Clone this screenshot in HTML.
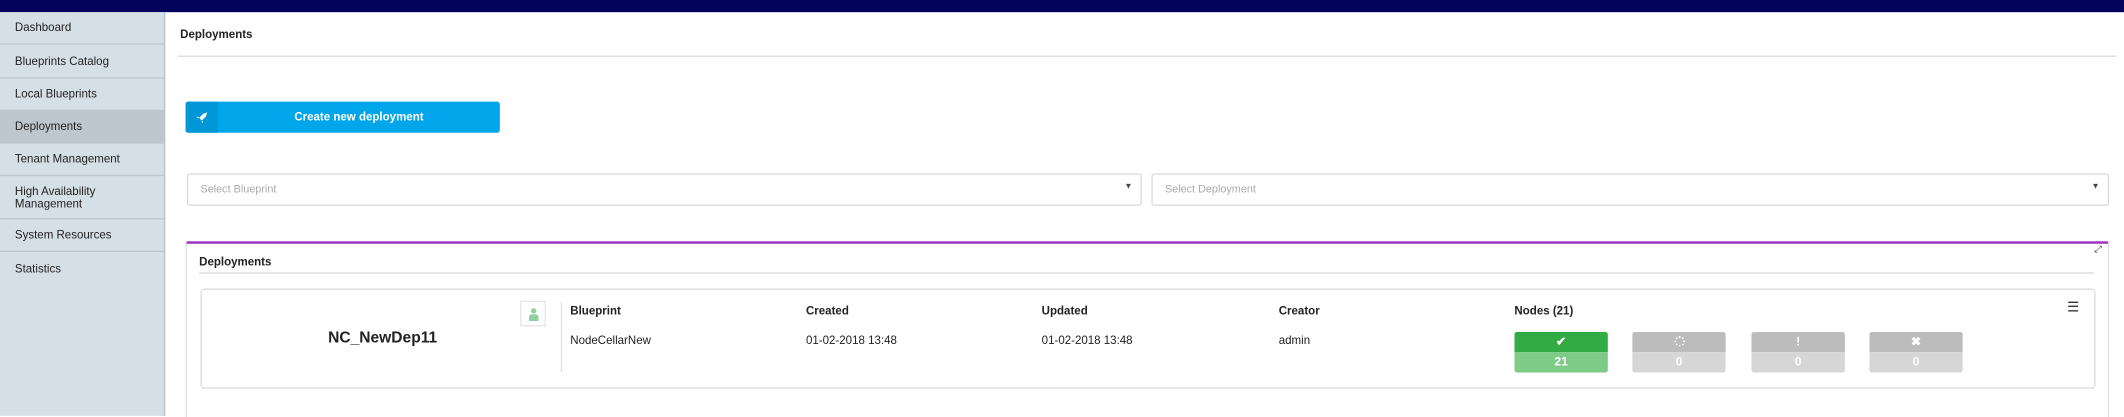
<!DOCTYPE html>
<html><head><meta charset="utf-8"><style>
html,body{margin:0;padding:0;width:2124px;height:417px;overflow:hidden;background:#fff}
#w{position:absolute;left:0;top:0;width:1568px;height:307.8px;overflow:hidden;transform:scale(1.35459);transform-origin:0 0;font-family:"Liberation Sans",sans-serif;color:#222}
.a{position:absolute}
.side{left:0;top:9px;width:121px;height:298px;background:#d5dfe6;border-right:1px solid #b9c3ca}
.row{position:absolute;left:0;width:121px;border-bottom:1px solid #bcc6cd;font-size:8.5px;box-sizing:border-box;padding-left:11px;display:flex;align-items:center;line-height:8.5px}
.hd{font-size:8.5px;font-weight:bold}
.v{font-size:8.5px}
.b{position:absolute;top:245px;width:69px;height:30px;border-radius:2px;overflow:hidden;color:#fff;font-weight:bold;font-size:9px;text-align:center}
.b .t{height:15px;line-height:15px}
.b .u{height:15px;line-height:15px}
.g .t{background:#33ab44}.g .u{background:#7dcb86}
.y .t{background:#bcbcbc}.y .u{background:#d6d6d6}
</style></head><body><div id="w">
<div class="a" style="left:0;top:0;width:1568px;height:9px;background:#03035c"></div>
<div class="a side">
<div class="row" style="top:0;height:24px">Dashboard</div>
<div class="row" style="top:24px;height:25px">Blueprints Catalog</div>
<div class="row" style="top:49px;height:24px">Local Blueprints</div>
<div class="row" style="top:73px;height:24px;background:#bec7cd">Deployments</div>
<div class="row" style="top:97px;height:24px">Tenant Management</div>
<div class="row" style="top:121px;height:32px">High Availability<br>Management</div>
<div class="row" style="top:153px;height:24px">System Resources</div>
<div class="row" style="top:177px;height:24px;border-bottom:none">Statistics</div>
</div>
<div class="a hd" style="left:133px;top:20px">Deployments</div>
<div class="a" style="left:131px;top:41px;width:1431px;height:1px;background:#ddd"></div>
<div class="a" style="left:137px;top:75px;width:232px;height:23px;background:#00a6e9;border-radius:2px;overflow:hidden">
<div class="a" style="left:0;top:0;width:24px;height:23px;background:#0097d6"></div>
<svg class="a" style="left:7px;top:7px" width="10" height="10" viewBox="0 0 10 10"><path d="M9 1 L6 2 L3 5 L5 7 L8 4 Z M3 5 L1 5 L2 4 Z M5 7 L5 9 L6 8 Z" fill="#fff"/></svg>
<div class="a" style="left:24px;right:0;top:0;line-height:23px;text-align:center;color:#fff;font-weight:bold;font-size:8.5px">Create new deployment</div>
</div>
<div class="a" style="left:138px;top:128px;width:703px;height:22px;border:1px solid #ddd;border-radius:2px"><span class="a" style="left:9px;top:6px;font-size:8px;color:#aaa">Select Blueprint</span><span class="a" style="right:6px;top:6px;font-size:6px;color:#444">▼</span></div>
<div class="a" style="left:850px;top:128px;width:705px;height:22px;border:1px solid #ddd;border-radius:2px"><span class="a" style="left:9px;top:6px;font-size:8px;color:#aaa">Select Deployment</span><span class="a" style="right:6px;top:6px;font-size:6px;color:#444">▼</span></div>
<div class="a" style="left:137px;top:178px;width:1418px;height:128px;border:1px solid #ddd;border-bottom:none;border-top:2px solid #9f33c1;border-radius:2px 2px 0 0"></div>
<div class="a" style="left:1546px;top:181px;font-size:7px;color:#444">⤢</div>
<div class="a hd" style="left:147px;top:188px">Deployments</div>
<div class="a" style="left:147px;top:201px;width:1399px;height:1px;background:#ddd"></div>
<div class="a" style="left:148px;top:213px;width:1397px;height:72px;border:1px solid #ddd;border-radius:3px"></div>
<div class="a" style="left:150px;top:244px;width:265px;text-align:center;font-weight:bold;font-size:11.5px">NC_NewDep11</div>
<div class="a" style="left:384px;top:222px;width:19px;height:19px;border:1px solid #e6e6e6;box-sizing:border-box">
<svg class="a" style="left:5px;top:4px" width="8" height="10" viewBox="0 0 8 10"><circle cx="4" cy="2.5" r="2" fill="#8fd19e"/><path d="M0.5 10 V7 Q0.5 5 4 5 Q7.5 5 7.5 7 V10Z" fill="#8fd19e"/></svg></div>
<div class="a" style="left:414px;top:223px;width:1px;height:52px;background:#e0e0e0"></div>
<div class="a hd" style="left:421px;top:224px">Blueprint</div>
<div class="a hd" style="left:595px;top:224px">Created</div>
<div class="a hd" style="left:769px;top:224px">Updated</div>
<div class="a hd" style="left:944px;top:224px">Creator</div>
<div class="a hd" style="left:1118px;top:224px">Nodes (21)</div>
<div class="a" style="left:1526px;top:222px;font-size:10px;color:#333">☰</div>
<div class="a v" style="left:421px;top:246px">NodeCellarNew</div>
<div class="a v" style="left:595px;top:246px">01-02-2018 13:48</div>
<div class="a v" style="left:769px;top:246px">01-02-2018 13:48</div>
<div class="a v" style="left:944px;top:246px">admin</div>
<div class="b g" style="left:1118px"><div class="t">✔</div><div class="u">21</div></div>
<div class="b y" style="left:1205px"><div class="t"><svg width="8" height="8" viewBox="0 0 8 8" style="vertical-align:-1px"><g fill="#fff"><circle cx="4" cy="0.8" r="0.8"/><circle cx="6.3" cy="1.7" r="0.7"/><circle cx="7.2" cy="4" r="0.7"/><circle cx="6.3" cy="6.3" r="0.6"/><circle cx="4" cy="7.2" r="0.6"/><circle cx="1.7" cy="6.3" r="0.6"/><circle cx="0.8" cy="4" r="0.6"/><circle cx="1.7" cy="1.7" r="0.7"/></g></svg></div><div class="u">0</div></div>
<div class="b y" style="left:1293px"><div class="t">!</div><div class="u">0</div></div>
<div class="b y" style="left:1380px"><div class="t">✖</div><div class="u">0</div></div>
</div></body></html>
